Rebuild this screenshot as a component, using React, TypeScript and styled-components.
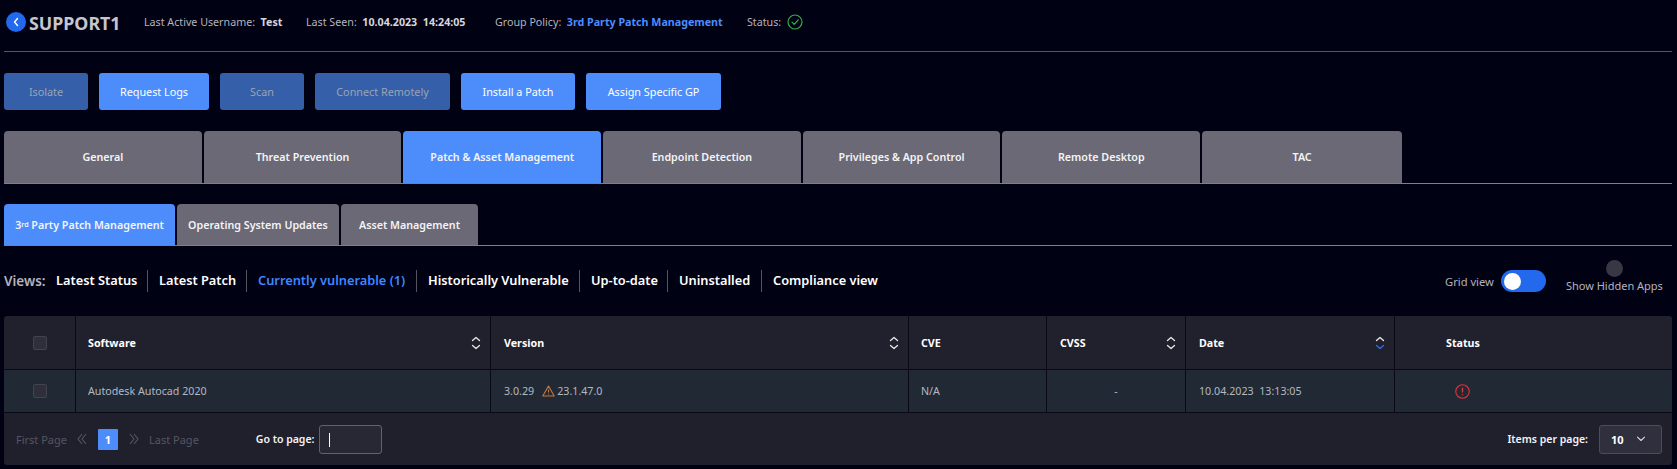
import React from 'react';
import styled, { createGlobalStyle } from 'styled-components';

const Global = createGlobalStyle`
  html, body { margin: 0; padding: 0; background: #010114; }
  body { font-family: "Noto Sans", "Open Sans", sans-serif; color: #fff; }
  * { box-sizing: border-box; }
`;

const Page = styled.div`
  width: 1677px;
  height: 469px;
  padding: 0 5px 0 4px;
  overflow: hidden;
  background: #010114;
`;

const Header = styled.header`
  height: 52px;
  padding: 11px 0 0 2px;
  display: flex;
  align-items: flex-start;
  border-bottom: 1px solid #55556a;
`;

const BackButton = styled.button`
  width: 20px;
  height: 20px;
  margin-top: 1px;
  padding: 0;
  border: 0;
  border-radius: 50%;
  background: #2369ee;
  display: flex;
  align-items: center;
  justify-content: center;
`;

const Title = styled.h1`
  margin: 1px 0 0 3px;
  width: 115px;
  font-size: 17.8px;
  line-height: 22px;
  font-weight: 700;
  color: #c6c6ce;
`;

const Meta = styled.div<{ $w: number }>`
  width: ${p => p.$w}px;
  flex: none;
  font-size: 10.7px;
  line-height: 22px;
  color: #b4b4bc;
  white-space: pre;
`;

const MetaValue = styled.b<{ $blue?: boolean }>`
  font-weight: 700;
  color: ${p => (p.$blue ? '#4d8dff' : '#d6d6dc')};
`;

const StatusIcon = styled.svg`
  margin: 3px 0 0 -3px;
`;

const ActionBar = styled.div`
  display: flex;
  gap: 11px;
  margin-top: 21px;
`;

const ActionButton = styled.button<{ $w: number; $off?: boolean }>`
  width: ${p => p.$w}px;
  height: 37px;
  padding: 0;
  border: 0;
  border-radius: 3px;
  font-family: inherit;
  font-size: 10.8px;
  background: ${p => (p.$off ? '#3560a9' : '#4d8dfb')};
  color: ${p => (p.$off ? '#9aa3b5' : '#ffffff')};
`;

const TabRow = styled.nav<{ $top: number; $h: number; $gap: number }>`
  display: flex;
  gap: ${p => p.$gap}px;
  height: ${p => p.$h}px;
  margin-top: ${p => p.$top}px;
  border-bottom: 1px solid #4d85f0;
`;

const Tab = styled.div<{ $w: number; $active?: boolean }>`
  width: ${p => p.$w}px;
  display: flex;
  align-items: center;
  justify-content: center;
  border-radius: 4px 4px 0 0;
  font-size: 10.7px;
  font-weight: 600;
  color: #f4f4f6;
  background: ${p => (p.$active ? '#4d8dfb' : '#6a6975')};
`;

const Sup = styled.sup`
  font-size: 7px;
  line-height: 0;
`;

const ViewsRow = styled.div`
  height: 22px;
  margin-top: 24px;
  display: flex;
  align-items: center;
`;

const ViewsLabel = styled.strong`
  width: 52px;
  font-size: 13.5px;
  font-weight: 600;
  color: #b4b4bc;
`;

const ViewList = styled.div`
  display: flex;
  width: 826px;
`;

const View = styled.span<{ $active?: boolean; $w: number }>`
  width: ${p => p.$w}px;
  flex: none;
  height: 22px;
  line-height: 21px;
  padding-left: 11px;
  border-right: 1px solid #55555f;
  font-size: 12.8px;
  font-weight: 600;
  white-space: nowrap;
  color: ${p => (p.$active ? '#3f87ff' : '#ffffff')};
  &:first-child { padding-left: 0; }
  &:last-child { border-right: 0; }
`;

const GridLabel = styled.span`
  margin-left: 563px;
  font-size: 11.2px;
  color: #b4b4bc;
`;

const Toggle = styled.div`
  width: 45px;
  height: 22px;
  margin-left: 7px;
  padding: 2.5px 3px;
  border-radius: 11px;
  background: #2369ee;
`;

const Knob = styled.div`
  width: 17px;
  height: 17px;
  border-radius: 50%;
  background: #fff;
`;

const Hidden = styled.div`
  width: 97px;
  margin: -8px 0 0 20px;
  display: flex;
  flex-direction: column;
  align-items: center;
  font-size: 11px;
  line-height: 16px;
  color: #b4b4bc;
  white-space: nowrap;
`;

const HiddenDot = styled.div`
  width: 17px;
  height: 17px;
  margin-bottom: 1px;
  border-radius: 50%;
  background: #383844;
`;

const Table = styled.section`
  margin-top: 24px;
`;

const COLUMNS = '72px 415px 418px 138px 139px 209px 1fr';

const Row = styled.div<{ $h: number; $bg: string; $radius?: boolean }>`
  display: grid;
  grid-template-columns: ${COLUMNS};
  height: ${p => p.$h}px;
  background: ${p => p.$bg};
  border-bottom: 1px solid #090914;
  border-radius: ${p => (p.$radius ? '3px 3px 0 0' : '0')};
`;

const Cell = styled.div<{ $center?: boolean; $pad?: number; $head?: boolean }>`
  position: relative;
  display: flex;
  align-items: center;
  justify-content: ${p => (p.$center ? 'center' : 'flex-start')};
  padding-left: ${p => p.$pad ?? 13}px;
  border-right: 1px solid #090914;
  font-size: 10.7px;
  font-weight: ${p => (p.$head ? 700 : 400)};
  color: ${p => (p.$head ? '#fff' : '#b4b8c0')};
  white-space: pre;
  &:last-child { border-right: 0; }
`;

const Check = styled.span`
  width: 14px;
  height: 14px;
  border: 1px solid #43434f;
  border-radius: 2px;
  background: #2f2f3b;
`;

const SortIcon = styled.svg`
  position: absolute;
  right: 8px;
  top: 50%;
  margin-top: -8px;
`;

const WarnIcon = styled.svg`
  margin: 0 2px 0 8px;
  flex: none;
`;

const Footer = styled.div`
  height: 52px;
  display: flex;
  align-items: center;
  padding: 0 10px 0 12px;
  background: #20202c;
  border-radius: 0 0 3px 3px;
`;

const PageLink = styled.span`
  font-size: 11px;
  color: #555562;
`;

const Arrows = styled.svg`
  margin: 0 10px;
  flex: none;
`;

const PageNum = styled.span`
  width: 20px;
  height: 21px;
  margin: 0 1px;
  display: flex;
  align-items: center;
  justify-content: center;
  background: #4d8dfb;
  font-size: 11px;
  font-weight: 700;
  border-radius: 1px;
`;

const FooterLabel = styled.span<{ $left: string }>`
  margin-left: ${p => p.$left};
  font-size: 10.5px;
  font-weight: 600;
  color: #f4f4f6;
`;

const GoInput = styled.div`
  width: 63px;
  height: 29px;
  margin-left: 5px;
  padding: 7px 0 0 9px;
  border: 1px solid #62626e;
  border-radius: 3px;
  background: #282834;
`;

const Caret = styled.span`
  display: block;
  width: 1px;
  height: 14px;
  background: #fff;
`;

const Select = styled.div`
  width: 63px;
  height: 29px;
  margin-left: 11px;
  padding: 0 15px 0 11px;
  display: flex;
  align-items: center;
  justify-content: space-between;
  border: 1px solid #4c4c5a;
  border-radius: 3px;
  background: #2f2f3e;
  font-size: 11px;
  font-weight: 700;
`;

const Sort = ({ active }: { active?: boolean }) => (
  <SortIcon width="12" height="16" viewBox="0 0 12 16" fill="none" strokeWidth="1.3" strokeLinecap="round" strokeLinejoin="round">
    <path d="M2.5 5.5 6 2.5l3.5 3" stroke="#e8e8ec" />
    <path d="M2.5 10.5 6 13.5l3.5-3" stroke={active ? '#2d6fe8' : '#e8e8ec'} />
  </SortIcon>
);

const actions = [
  { t: 'Isolate', w: 84, off: true },
  { t: 'Request Logs', w: 110 },
  { t: 'Scan', w: 84, off: true },
  { t: 'Connect Remotely', w: 135, off: true },
  { t: 'Install a Patch', w: 114 },
  { t: 'Assign Specific GP', w: 135 },
];

const tabs = ['General', 'Threat Prevention', 'Patch & Asset Management', 'Endpoint Detection', 'Privileges & App Control', 'Remote Desktop', 'TAC'];

const views = [
  { t: 'Latest Status', w: 92 },
  { t: 'Latest Patch', w: 99 },
  { t: 'Currently vulnerable (1)', w: 170, active: true },
  { t: 'Historically Vulnerable', w: 163 },
  { t: 'Up-to-date', w: 88 },
  { t: 'Uninstalled', w: 94 },
  { t: 'Compliance view', w: 120 },
];

export default function App() {
  return (
    <>
      <Global />
      <Page>
        <Header>
          <BackButton aria-label="Back">
            <svg width="8" height="10" viewBox="0 0 8 10" fill="none">
              <path d="M5.5 1.5 2.5 5l3 3.5" stroke="#fff" strokeWidth="1.4" strokeLinecap="round" strokeLinejoin="round" />
            </svg>
          </BackButton>
          <Title>SUPPORT1</Title>
          <Meta $w={162}>Last Active Username:  <MetaValue>Test</MetaValue></Meta>
          <Meta $w={189}>Last Seen:  <MetaValue>10.04.2023  14:24:05</MetaValue></Meta>
          <Meta $w={252}>Group Policy:  <MetaValue $blue>3rd Party Patch Management</MetaValue></Meta>
          <Meta $w={43}>Status:</Meta>
          <StatusIcon width="16" height="16" viewBox="0 0 16 16" fill="none">
            <circle cx="8" cy="8" r="7" stroke="#33b04a" strokeWidth="1.2" />
            <path d="M5 8.2 7.2 10.4 11.2 5.8" stroke="#33b04a" strokeWidth="1.2" strokeLinecap="round" strokeLinejoin="round" />
          </StatusIcon>
        </Header>

        <ActionBar>
          {actions.map(a => (
            <ActionButton key={a.t} $w={a.w} $off={a.off}>{a.t}</ActionButton>
          ))}
        </ActionBar>

        <TabRow $top={21} $h={53} $gap={2}>
          {tabs.map((t, i) => (
            <Tab key={t} $w={i === 6 ? 200 : 197.7} $active={i === 2}>{t}</Tab>
          ))}
        </TabRow>

        <TabRow $top={20} $h={42} $gap={2}>
          <Tab $w={171} $active>3<Sup>rd</Sup>&nbsp;Party Patch Management</Tab>
          <Tab $w={162}>Operating System Updates</Tab>
          <Tab $w={137}>Asset Management</Tab>
        </TabRow>

        <ViewsRow>
          <ViewsLabel>Views:</ViewsLabel>
          <ViewList>
            {views.map(v => (
              <View key={v.t} $w={v.w} $active={v.active}>{v.t}</View>
            ))}
          </ViewList>
          <GridLabel>Grid view</GridLabel>
          <Toggle><Knob /></Toggle>
          <Hidden>
            <HiddenDot />
            Show Hidden Apps
          </Hidden>
        </ViewsRow>

        <Table>
          <Row $h={54} $bg="#21212d" $radius>
            <Cell $center $pad={0}><Check /></Cell>
            <Cell $head $pad={12}>Software<Sort /></Cell>
            <Cell $head>Version<Sort /></Cell>
            <Cell $head $pad={12}>CVE</Cell>
            <Cell $head>CVSS<Sort /></Cell>
            <Cell $head>Date<Sort active /></Cell>
            <Cell $head $pad={51}>Status</Cell>
          </Row>
          <Row $h={43} $bg="#212935">
            <Cell $center $pad={0}><Check /></Cell>
            <Cell $pad={12}>Autodesk Autocad 2020</Cell>
            <Cell>
              3.0.29
              <WarnIcon width="13" height="12" viewBox="0 0 13 12" fill="none">
                <path d="M6.5 1 12.2 11H.8Z" stroke="#c9773c" strokeWidth="1.1" strokeLinejoin="round" />
                <path d="M6.5 4.4v3.2M6.5 8.8v.6" stroke="#c9773c" strokeWidth="1.1" />
              </WarnIcon>
              23.1.47.0
            </Cell>
            <Cell $pad={12}>N/A</Cell>
            <Cell $center $pad={0}>-</Cell>
            <Cell $pad={13}>10.04.2023  13:13:05</Cell>
            <Cell $pad={60}>
              <svg width="15" height="15" viewBox="0 0 15 15" fill="none">
                <circle cx="7.5" cy="7.5" r="6.7" stroke="#d9363e" strokeWidth="1.1" />
                <path d="M7.5 3.8v4.6M7.5 10.2v1" stroke="#d9363e" strokeWidth="1.4" />
              </svg>
            </Cell>
          </Row>
          <Footer>
            <PageLink>First Page</PageLink>
            <Arrows width="10" height="12" viewBox="0 0 10 12" fill="none" stroke="#55555f" strokeWidth="1.1">
              <path d="M5 1 1 6l4 5M9 1 5 6l4 5" />
            </Arrows>
            <PageNum>1</PageNum>
            <Arrows width="10" height="12" viewBox="0 0 10 12" fill="none" stroke="#55555f" strokeWidth="1.1">
              <path d="M1 1l4 5-4 5M5 1l4 5-4 5" />
            </Arrows>
            <PageLink>Last Page</PageLink>
            <FooterLabel $left="57px">Go to page:</FooterLabel>
            <GoInput><Caret /></GoInput>
            <FooterLabel $left="auto">Items per page:</FooterLabel>
            <Select>
              10
              <svg width="10" height="6" viewBox="0 0 10 6" fill="none">
                <path d="M1.5 1.2 5 4.5l3.5-3.3" stroke="#d8d8de" strokeWidth="1.1" strokeLinecap="round" strokeLinejoin="round" />
              </svg>
            </Select>
          </Footer>
        </Table>
      </Page>
    </>
  );
}
